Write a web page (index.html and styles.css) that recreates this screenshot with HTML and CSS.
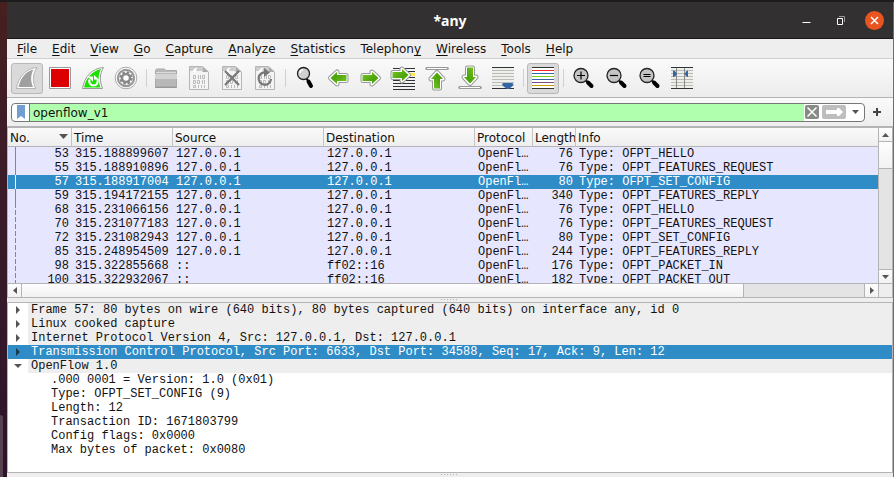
FILE: index.html
```
<!DOCTYPE html>
<html lang="en">
<head>
  <meta charset="UTF-8">
  <meta name="viewport" content="width=device-width, initial-scale=1.0">
  <title>*any</title>
  <link rel="stylesheet" href="styles.css">
</head>
<body>
  <!-- Strip of the dock behind the window -->
  <div class="desktop"><div class="dock"></div></div>

  <div class="window">
    <header class="titlebar">
      <h1>*any</h1>
      <div class="window-buttons">
        <button aria-label="Minimize"><svg width="19" height="19"><path d="M5.500 11.500h8" stroke="#fff"/></svg></button>
        <button aria-label="Restore"><svg width="19" height="19" fill="none"><path d="M8 5.500h5.500v5.500" stroke="#999"/><path d="M6.500 7.500h5v6h-5z" stroke="#fff"/></svg></button>
        <button class="close" aria-label="Close"><svg width="19" height="19"><path d="M6 6l7 7M13 6l-7 7" stroke="#fff" stroke-width="1.500"/></svg></button>
      </div>
    </header>

    <nav class="menubar">
      <a href="#"><u>F</u>ile</a>
      <a href="#"><u>E</u>dit</a>
      <a href="#"><u>V</u>iew</a>
      <a href="#"><u>G</u>o</a>
      <a href="#"><u>C</u>apture</a>
      <a href="#"><u>A</u>nalyze</a>
      <a href="#"><u>S</u>tatistics</a>
      <a href="#">Telephon<u>y</u></a>
      <a href="#"><u>W</u>ireless</a>
      <a href="#"><u>T</u>ools</a>
      <a href="#"><u>H</u>elp</a>
    </nav>

    <!-- Main toolbar -->
    <div class="toolbar">
      <button class="pressed" aria-label="Start capture">
        <svg viewBox="0 0 22 22"><path d="M.5 21.500C2.500 10 9.500 1.500 21 .5 16.500 7 16.500 14 19.500 21.500z" fill="#fff" stroke="#b5b5b5"/><path d="M2.500 20C4.500 11 9.500 4.500 17.500 2.500 14.500 8 14.500 14 17 20z" fill="#a0a0a0"/></svg>
      </button>
      <button aria-label="Stop capture">
        <svg viewBox="0 0 22 22"><path d="M.5.5h21v21H.5z" fill="#fff" stroke="#999"/><path d="M2 2h18v18H2z" fill="#d00"/></svg>
      </button>
      <button aria-label="Restart capture">
        <svg viewBox="0 0 22 22"><path d="M.5 21.500C2.500 10 9.500 1.500 21.500.5 17.500 7 17.500 14 20.500 21.500z" fill="#fff" stroke="#999"/><path d="M2 20.500C4 11 9.500 4.500 19 2 16 8 16 14 18.500 20.500z" fill="#1be000"/><path d="M7.500 12.500c-1 3 1 6 4 6s5-2.500 4-5.500" fill="none" stroke="#fff" stroke-width="2.200"/><path d="M5 9.500h6v5zM12 12.500v-4.500l5.500 5z" fill="#fff"/></svg>
      </button>
      <button aria-label="Capture options">
        <svg viewBox="0 0 22 22"><circle cx="11" cy="11" r="10.800" fill="#fff" stroke="#aaa"/><circle cx="11" cy="11" r="9.200" fill="#999"/><circle cx="11" cy="11" r="7" fill="#fff"/><circle cx="11" cy="11" r="5.500" fill="none" stroke="#888" stroke-width="2.500" stroke-dasharray="2.500 1.820"/><circle cx="11" cy="11" r="4" fill="none" stroke="#888" stroke-width="2.500"/></svg>
      </button>
      <span class="separator"></span>
      <button aria-label="Open file">
        <svg viewBox="0 0 22 22"><path d="M.5 19.500v-16l1-1.500h8l1 1.500h11v16z" fill="#b8b8b8" stroke="#aaa"/><path d="M1 5.500h20" stroke="#ddd"/><path d="M0 7h22v5H0z" fill="#d2d2d2"/><path d="M0 20.500h22" stroke="#999"/></svg>
      </button>
      <button aria-label="Save file">
        <svg viewBox="0 0 22 22"><use href="#page"/></svg>
      </button>
      <button aria-label="Close file">
        <svg viewBox="0 0 22 22"><use href="#page"/><path d="M4 4l14 14M18 4L4 18" stroke="#777" stroke-width="2.200"/></svg>
      </button>
      <button aria-label="Reload file">
        <svg viewBox="0 0 22 22"><use href="#page"/><path d="M12 5.500a6.200 6.200 0 1 0 5 6.500" fill="none" stroke="#777" stroke-width="2.200"/><path d="M10 1l6 4.500-6 4.500z" fill="#777"/></svg>
      </button>
      <span class="separator"></span>
      <button aria-label="Find packet">
        <svg viewBox="0 0 22 22"><path d="M12.500 11.500l2 3" stroke="#111" stroke-width="2"/><path d="M14.500 14.500l2.500 4.500" stroke="#000" stroke-width="4" stroke-linecap="round"/><circle cx="9.500" cy="6.500" r="6" fill="#d0d0d0" stroke="#222" stroke-width="1.300"/><path d="M6 6c0-2 1-3 3-3" fill="none" stroke="#fff" stroke-width="1.500"/></svg>
      </button>
      <button aria-label="Previous packet">
        <svg viewBox="0 0 22 22"><g transform="rotate(180 11 11)"><use href="#arrow"/></g></svg>
      </button>
      <button aria-label="Next packet">
        <svg viewBox="0 0 22 22"><use href="#arrow"/></svg>
      </button>
      <button aria-label="Go to packet">
        <svg viewBox="0 0 22 22"><path d="M0 1.500h22M0 4.500h22M0 10.500h22M0 13.500h22M0 16.500h22M0 19.500h22M0 22.500h22" stroke="#2e3436"/><path d="M15 6h7v3h-7z" fill="#fce94f"/><g transform="translate(-3 -3)"><use href="#arrow"/></g></svg>
      </button>
      <button aria-label="First packet">
        <svg viewBox="0 0 22 22"><path d="M.8 1.500h20.500" stroke="#999" stroke-width="3" stroke-linecap="round"/><path d="M1 1.500h20" stroke="#fff"/><g transform="translate(0 2) rotate(-90 11 11)"><use href="#arrow"/></g></svg>
      </button>
      <button aria-label="Last packet">
        <svg viewBox="0 0 22 22"><path d="M.8 20.500h20.500" stroke="#999" stroke-width="3" stroke-linecap="round"/><path d="M1 20.500h20" stroke="#fff"/><g transform="translate(0 -2) rotate(90 11 11)"><use href="#arrow"/></g></svg>
      </button>
      <button aria-label="Auto scroll">
        <svg viewBox="0 0 22 22"><path d="M0 0h22v22H0z" fill="#eeeeec"/><path d="M0 3.500h22M0 6.500h22M0 9.500h22M0 12.500h22M0 15.500h22M0 18.500h22" stroke="#babdb6"/><path d="M0 .5h22M0 21.500h22" stroke="#2e3436"/><path d="M10 17q.5-1 2-1h7.500q1.500 0 2 1l-1 2-3.500 3h-2l-4-3z" fill="#3465a4"/></svg>
      </button>
      <span class="separator"></span>
      <button class="pressed" aria-label="Colorize packets">
        <svg viewBox="0 0 22 22"><path d="M0 0h22v22H0z" fill="#fff"/><path d="M0 .5h22M0 21.500h22" stroke="#2e3436"/><path d="M0 3.500h22" stroke="#ef2929"/><path d="M0 6.500h22M0 12.500h22" stroke="#3465a4"/><path d="M0 9.500h22" stroke="#73d216"/><path d="M0 15.500h22" stroke="#75507b"/><path d="M0 18.500h22" stroke="#c4a000"/></svg>
      </button>
      <span class="separator"></span>
      <button aria-label="Zoom in">
        <svg viewBox="0 0 22 22"><use href="#lens"/><path d="M5 8.500h8M9 4.500v8" stroke="#000" stroke-width="1.200"/></svg>
      </button>
      <button aria-label="Zoom out">
        <svg viewBox="0 0 22 22"><use href="#lens"/><path d="M5 8.500h8" stroke="#000" stroke-width="1.200"/></svg>
      </button>
      <button aria-label="Normal size">
        <svg viewBox="0 0 22 22"><use href="#lens"/><path d="M5.500 7.500h7M5.500 9.500h7" stroke="#000"/></svg>
      </button>
      <button aria-label="Resize columns">
        <svg viewBox="0 0 22 22"><path d="M0 0h22v22H0z" fill="#eeeeec"/><path d="M0 3.500h22M0 6.500h22M0 9.500h22M0 12.500h22M0 15.500h22M0 18.500h22" stroke="#babdb6"/><path d="M5.500 0v22M13.500 0v22" stroke="#888a85"/><path d="M0 .5h22M0 21.500h22" stroke="#2e3436"/><path d="M2 3.500l2 .5 2 3-2 2.500-2 .5zM17 3.500l-1.500.5-2 3 2 2.500 1.500.5z" fill="#3465a4"/></svg>
      </button>
    </div>

    <!-- Display filter -->
    <div class="filterbar">
      <div class="filter">
        <button class="bookmark" aria-label="Filter bookmarks"><svg width="8" height="14"><path d="M0 0h8v14l-4-3-4 3z" fill="#729fcf"/></svg></button>
        <input type="text" value="openflow_v1" aria-label="Display filter" spellcheck="false">
        <button class="clear" aria-label="Clear filter"><svg width="14" height="14"><path d="M2.500 2.500l9 9M11.500 2.500l-9 9" stroke="#fff" stroke-width="1.500"/></svg></button>
        <button class="apply" aria-label="Apply filter"><svg width="24" height="14"><path d="M4 5h11V3h2l4 4-4 4h-2V9H4z" fill="#fff"/></svg></button>
        <button class="recent" aria-label="Recent filters"><svg width="7" height="4"><path d="M0 0h7L3.500 4z" fill="#555"/></svg></button>
      </div>
      <button class="add" aria-label="Add filter button"><svg width="8" height="8"><path d="M0 4h8M4 0v8" stroke="#444" stroke-width="2"/></svg></button>
    </div>

    <!-- Packet list -->
    <div class="packets">
      <div class="packet-view">
        <table>
          <colgroup>
            <col class="col-no"><col class="col-time"><col class="col-address"><col class="col-address"><col class="col-protocol"><col class="col-length"><col>
          </colgroup>
          <thead>
            <tr>
              <th><span class="sorted">No. <svg width="9" height="5"><path d="M0 0h9L4.500 5z" fill="#555"/></svg></span></th>
              <th>Time</th><th>Source</th><th>Destination</th><th>Protocol</th><th>Length</th><th>Info</th>
            </tr>
          </thead>
          <tbody>
            <tr class="related"><td>53</td><td>315.188899607</td><td>127.0.0.1</td><td>127.0.0.1</td><td>OpenFlow</td><td>76</td><td>Type: OFPT_HELLO</td></tr>
            <tr class="related"><td>55</td><td>315.188910896</td><td>127.0.0.1</td><td>127.0.0.1</td><td>OpenFlow</td><td>76</td><td>Type: OFPT_FEATURES_REQUEST</td></tr>
            <tr class="related selected"><td>57</td><td>315.188917004</td><td>127.0.0.1</td><td>127.0.0.1</td><td>OpenFlow</td><td>80</td><td>Type: OFPT_SET_CONFIG</td></tr>
            <tr class="related"><td>59</td><td>315.194172155</td><td>127.0.0.1</td><td>127.0.0.1</td><td>OpenFlow</td><td>340</td><td>Type: OFPT_FEATURES_REPLY</td></tr>
            <tr><td>68</td><td>315.231066156</td><td>127.0.0.1</td><td>127.0.0.1</td><td>OpenFlow</td><td>76</td><td>Type: OFPT_HELLO</td></tr>
            <tr><td>70</td><td>315.231077183</td><td>127.0.0.1</td><td>127.0.0.1</td><td>OpenFlow</td><td>76</td><td>Type: OFPT_FEATURES_REQUEST</td></tr>
            <tr><td>72</td><td>315.231082943</td><td>127.0.0.1</td><td>127.0.0.1</td><td>OpenFlow</td><td>80</td><td>Type: OFPT_SET_CONFIG</td></tr>
            <tr><td>85</td><td>315.248954509</td><td>127.0.0.1</td><td>127.0.0.1</td><td>OpenFlow</td><td>244</td><td>Type: OFPT_FEATURES_REPLY</td></tr>
            <tr><td>98</td><td>315.322855668</td><td>::</td><td>ff02::16</td><td>OpenFlow</td><td>176</td><td>Type: OFPT_PACKET_IN</td></tr>
            <tr><td>100</td><td>315.322932067</td><td>::</td><td>ff02::16</td><td>OpenFlow</td><td>182</td><td>Type: OFPT_PACKET_OUT</td></tr>
          </tbody>
        </table>
      </div>
      <div class="scrollbar vertical">
        <button aria-label="Scroll up"><svg width="7" height="4"><path d="M0 4h7L3.500 0z" fill="#555"/></svg></button>
        <div class="thumb"></div>
        <div class="track"></div>
        <button aria-label="Scroll down"><svg width="7" height="4"><path d="M0 0h7L3.500 4z" fill="#555"/></svg></button>
      </div>
      <div class="scrollbar horizontal">
        <button aria-label="Scroll left"><svg width="4" height="7"><path d="M4 0v7L0 3.500z" fill="#555"/></svg></button>
        <div class="thumb"></div>
        <div class="track"></div>
        <button aria-label="Scroll right"><svg width="4" height="7"><path d="M0 0v7l4-3.500z" fill="#555"/></svg></button>
      </div>
      <div class="corner"></div>
    </div>

    <div class="splitter"></div>

    <!-- Packet details -->
    <ul class="details">
      <li><button aria-label="Expand"><svg width="4" height="8"><path d="M0 0v8l4-4z"/></svg></button><span>Frame 57: 80 bytes on wire (640 bits), 80 bytes captured (640 bits) on interface any, id 0</span></li>
      <li><button aria-label="Expand"><svg width="4" height="8"><path d="M0 0v8l4-4z"/></svg></button><span>Linux cooked capture</span></li>
      <li><button aria-label="Expand"><svg width="4" height="8"><path d="M0 0v8l4-4z"/></svg></button><span>Internet Protocol Version 4, Src: 127.0.0.1, Dst: 127.0.0.1</span></li>
      <li class="selected"><button aria-label="Expand"><svg width="4" height="8"><path d="M0 0v8l4-4z"/></svg></button><span>Transmission Control Protocol, Src Port: 6633, Dst Port: 34588, Seq: 17, Ack: 9, Len: 12</span></li>
      <li>
        <button aria-label="Collapse"><svg width="8" height="4"><path d="M0 0h8L4 4z"/></svg></button><span>OpenFlow 1.0</span>
        <ul>
          <li>.000 0001 = Version: 1.0 (0x01)</li>
          <li>Type: OFPT_SET_CONFIG (9)</li>
          <li>Length: 12</li>
          <li>Transaction ID: 1671803799</li>
          <li>Config flags: 0x0000</li>
          <li>Max bytes of packet: 0x0080</li>
        </ul>
      </li>
    </ul>

    <div class="splitter"></div>
  </div>

  <!-- Shapes shared by the toolbar icons -->
  <svg class="shapes">
    <defs>
      <linearGradient id="green" x1="0" y1="0" x2="1" y2="1">
        <stop offset="0" stop-color="#7cc92a"/>
        <stop offset=".6" stop-color="#4ea60a"/>
      </linearGradient>
      <g id="arrow" stroke-linejoin="round">
        <path d="M3 8.500h9V5l6.500 6-6.500 6v-3.500H3z" fill="#999" stroke="#999" stroke-width="5"/>
        <path d="M3 8.500h9V5l6.500 6-6.500 6v-3.500H3z" fill="#fff" stroke="#fff" stroke-width="3"/>
        <path d="M2.500 8h9.500V5l6.500 6-6.500 6v-3H2.500z" fill="url(#green)"/>
      </g>
      <g id="lens">
        <path d="M14 13.500l2 2" stroke="#111" stroke-width="2"/>
        <path d="M16 15.500l3.500 3.500" stroke="#000" stroke-width="4" stroke-linecap="round"/>
        <circle cx="9" cy="8.500" r="7" fill="#c4c4c4" stroke="#222" stroke-width="1.300"/>
      </g>
      <g id="page">
        <path d="M1.500-.5h13l6 5.500v17.500h-19z" fill="#f4f4f4" stroke="#b5b5b5"/>
        <path d="M2 0h12v4H2z" fill="#ccc"/>
        <path d="M4.500 5q1-4 5-4.500-2 2-1 4.500z" fill="#fff"/>
        <path d="M14.500-.5v5.500h6z" fill="#aaa"/>
        <path d="M5.500 8.500h2v3h-2zM14.500 8.500h2v3h-2zM9.500 13.500h2v3h-2zM5.500 13.500h2v3h-2zM5.500 18.500h2v2h-2z" fill="none" stroke="#bbb"/>
        <path d="M10.500 8v4M12.500 8v4M14.500 13v4M16.500 13v4M10.500 18v3M13.500 18v3M16.500 18v3" stroke="#bbb"/>
      </g>
    </defs>
  </svg>
</body>
</html>
```

FILE: styles.css
```
* {
  box-sizing: border-box;
}

body {
  margin: 0;
  min-height: 100vh;
  display: flex;
  padding-top: 2px;
  background-color: #1d1b1c;
  font: 12px "DejaVu Sans", sans-serif;
  color: #111;
}

h1, ul {
  margin: 0;
  padding: 0;
}

ul {
  list-style: none;
}

button {
  display: flex;
  align-items: center;
  justify-content: center;
  flex: none;
  padding: 0;
  border: none;
  background: none;
}

svg {
  display: block;
}

.shapes {
  position: absolute;
  width: 0;
  height: 0;
}

/* Desktop behind the window */
.desktop {
  width: 7px;
  display: flex;
  align-items: flex-end;
  background: linear-gradient(#47201f, #3d1c28 30%, #2d142a);
}

.dock {
  width: 3px;
  height: 62px;
  border-radius: 0 3px 0 0;
  background-color: #57424f;
}

.window {
  flex: 1;
  min-width: 0;
  display: flex;
  flex-direction: column;
  border-right: 1px solid #6e6e6e;
  background-color: #eee;
}

/* Title bar */
.titlebar {
  display: grid;
  grid-template-columns: 1fr auto 1fr;
  align-items: center;
  height: 37px;
  padding: 0 9px;
  border-bottom: 1px solid #1a1819;
  background-color: #323030;
}

.titlebar h1 {
  grid-column: 2;
  font: bold 14px "Noto Sans", sans-serif;
  color: #fff;
}

.window-buttons {
  display: flex;
  justify-content: flex-end;
  gap: 15px;
}

.close {
  border-radius: 50%;
  background-color: #e95420;
}

/* Menu */
.menubar {
  display: flex;
  gap: 1px;
  height: 20px;
  padding-left: 3px;
  border-bottom: 1px solid #d0d0d0;
}

.menubar a {
  padding: 0 7px;
  line-height: 20px;
  color: #111;
  text-decoration: none;
}

.menubar u {
  text-underline-offset: 2px;
  text-decoration-thickness: 1px;
}

/* Toolbar */
.toolbar {
  display: flex;
  gap: 1px;
  height: 39px;
  padding: 4px;
  border-bottom: 1px solid #b4b4b4;
  background: linear-gradient(#fafafa, #ececec);
}

.toolbar button {
  align-items: flex-start;
  width: 32px;
  height: 31px;
  padding-top: 4px;
}

.toolbar button svg {
  width: 22px;
  height: 22px;
  overflow: visible;
}

.toolbar .pressed {
  padding-top: 3px;
  border: 1px solid #b8b8b8;
  border-radius: 3px;
  background-color: #dadada;
}

.separator {
  width: 6px;
  margin: 6px 0;
  background: linear-gradient(#d0d0d0, #d0d0d0) center / 1px 100% no-repeat;
}

/* Display filter */
.filterbar {
  display: flex;
  align-items: center;
  gap: 8px;
  height: 28px;
  padding: 0 12px 0 4px;
  background: linear-gradient(#fafafa, #eee);
}

.filter {
  flex: 1;
  display: flex;
  align-items: center;
  height: 19px;
  border: 1px solid #777;
  border-radius: 4px;
  background-color: #fff;
  overflow: hidden;
}

.bookmark {
  width: 18px;
  height: 17px;
  border-right: 1px solid #777;
}

.filter input {
  flex: 1;
  min-width: 0;
  height: 17px;
  padding: 2px 3px 0;
  border: none;
  outline: none;
  background-color: #afffaf;
  font: inherit;
  color: #111;
}

.clear {
  margin-left: 1px;
  border-radius: 2px;
  background-color: #888a85;
}

.apply {
  margin-left: 3px;
  border-radius: 2px;
  background-color: #bebebe;
}

.recent {
  width: 18px;
  height: 17px;
}

/* Packet list */
.packets {
  display: grid;
  grid-template-columns: 1fr 14px;
  grid-template-rows: 155px 14px;
  border: 1px solid #b4b4b4;
  border-top-width: 2px;
}

.packet-view {
  overflow: hidden;
  background-color: #fff;
}

table {
  width: 100%;
  table-layout: fixed;
  border-collapse: separate;
  border-spacing: 0;
}

.col-no { width: 64px; }
.col-time { width: 101px; }
.col-address { width: 151px; }
.col-protocol { width: 58px; }
.col-length { width: 43px; }

th {
  height: 19px;
  padding: 2px 0 0 2px;
  border-right: 1px solid #c4c4c4;
  border-bottom: 1px solid #b4b4b4;
  background: linear-gradient(#fafafa, #eee);
  font-weight: normal;
  line-height: 16px;
  text-align: left;
  white-space: nowrap;
  overflow: hidden;
}

th:last-child {
  border-right: none;
}

.sorted {
  display: flex;
  justify-content: space-between;
  padding-right: 3px;
}

.sorted svg {
  margin-top: 4px;
}

td {
  height: 14px;
  padding: 0 3px;
  background-color: #e6e6ff;
  font: 12px/14px "Liberation Mono", monospace;
  white-space: nowrap;
  overflow: hidden;
  text-overflow: ellipsis;
}

td:nth-child(1), td:nth-child(6) {
  text-align: right;
}

/* Conversation line left of the packet number, dashed for other conversations */
td:first-child {
  background-image: repeating-linear-gradient(#85858f 0 5px, transparent 5px 7px);
  background-position: 7px 0;
  background-size: 1px 100%;
  background-repeat: no-repeat;
}

.related td:first-child {
  background-image: linear-gradient(#85858f, #85858f);
}

.selected td {
  background-color: #308cc6;
  color: #fff;
}

.selected td:first-child {
  background-image: linear-gradient(#fff, #fff);
}

/* Scroll bars */
.scrollbar {
  display: flex;
}

.scrollbar button, .thumb {
  background: linear-gradient(#fdfdfd, #f2f2f2);
}

.track {
  flex: 1;
  background-color: #e4e4e4;
}

.vertical {
  flex-direction: column;
  border-left: 1px solid #b4b4b4;
}

.vertical button {
  height: 14px;
  border-bottom: 1px solid #b4b4b4;
}

.vertical .thumb {
  height: 27px;
  border-bottom: 1px solid #b4b4b4;
}

.vertical button:last-child {
  border-top: 1px solid #b4b4b4;
  border-bottom: none;
}

.horizontal {
  border-top: 1px solid #b4b4b4;
}

.horizontal button {
  width: 14px;
  border-right: 1px solid #b4b4b4;
}

.horizontal .thumb {
  width: 83%;
  border-right: 1px solid #b4b4b4;
}

.horizontal button:last-child {
  border-left: 1px solid #b4b4b4;
  border-right: none;
}

.corner {
  border-top: 1px solid #b4b4b4;
  border-left: 1px solid #b4b4b4;
}

/* Grip dots between the panes */
.splitter {
  height: 4px;
  background: repeating-linear-gradient(90deg, #b4b4b4 0 1px, transparent 1px 3px) center 1px / 18px 1px no-repeat;
}

/* Packet details */
.details {
  flex: 1;
  border: 1px solid #b4b4b4;
  background-color: #fff;
  font: 12px/14px "Liberation Mono", monospace;
  white-space: nowrap;
  overflow: hidden;
}

.details > li {
  display: grid;
  grid-template-columns: 20px 1fr;
}

.details button {
  height: 14px;
  fill: #555;
}

.details span {
  padding-left: 3px;
  background-color: #eee;
}

.details ul {
  grid-column: 2;
  padding-left: 23px;
}

.details .selected, .details .selected span {
  background-color: #308cc6;
  color: #fff;
}

.details .selected button {
  fill: #1b3a50;
}
```
